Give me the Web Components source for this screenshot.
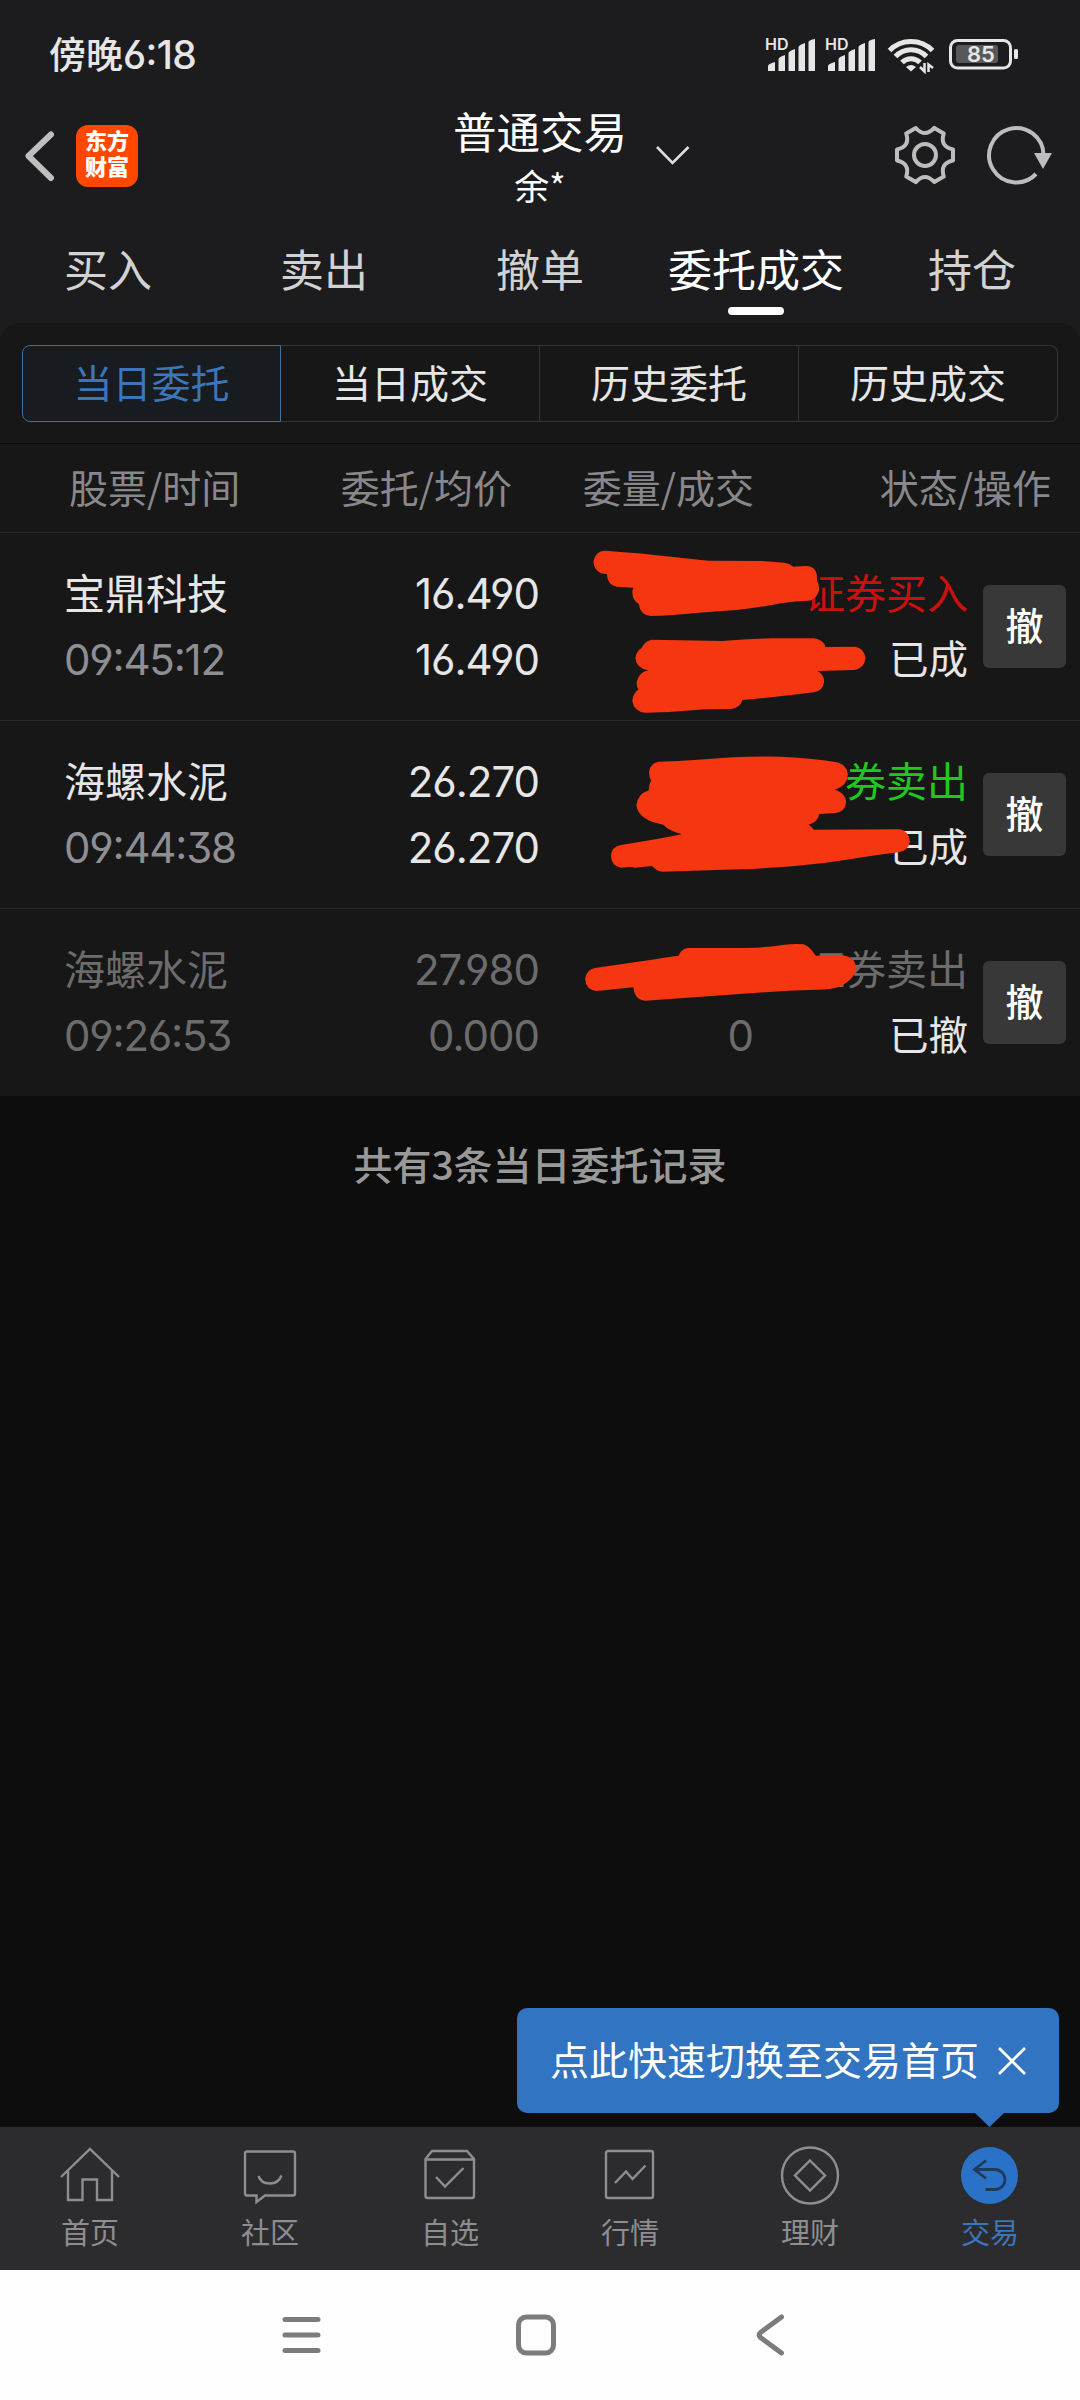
<!DOCTYPE html>
<html lang="zh-CN">
<head>
<meta charset="utf-8">
<title>普通交易</title>
<style>
    body {
        margin: 0;
        background: #0d0d0d;
        font-family: "Noto Sans CJK SC", sans-serif;
    }
</style>
</head>
<body>
<trade-app></trade-app>

<script>
// Base class: every component only has to return its markup
class BaseElement extends HTMLElement {
    constructor() {
        super();
        this.attachShadow({ mode: "open" });
    }

    connectedCallback() {
        this.shadowRoot.innerHTML = `
            <style>
                * { box-sizing: border-box; }
                svg { display: block; }
            </style>
            ${this.template()}
        `;
    }
}

class StatusBar extends BaseElement {
    signal() {
        return `
            <div class="signal">
                <span>HD</span>
                <svg width="54" height="34" viewBox="0 0 54 34" fill="#e6e6e6">
                    <path d="M4 34V29Q4 27 11 25V34ZM14.500 34V22Q15 20 21 18V34ZM24.500 34V16Q25 14 31 12V34ZM34.500 34V10Q35 8 41 6V34ZM44.500 34V5Q45 3 51 2V34Z"/>
                </svg>
            </div>
        `;
    }

    template() {
        return `
            <style>
                :host {
                    display: flex;
                    align-items: center;
                    height: 108px;
                    padding: 0 60px 0 49px;
                    color: #e6e6e6;
                }
                .time {
                    flex: 1;
                    padding-bottom: 3px;
                    font-size: 37px;
                    font-weight: 500;
                }
                .time b {
                    font: 500 39px Inter, sans-serif;
                    font-feature-settings: "cv03", "calt";
                    letter-spacing: -0.600px;
                }
                .signal {
                    position: relative;
                    width: 60px;
                }
                .signal span {
                    position: absolute;
                    left: 1px;
                    top: -1px;
                    font: 600 16px/16px Inter, sans-serif;
                }
            </style>
            <div class="time">傍晚<b>6:18</b></div>
            ${this.signal()}
            ${this.signal()}
            <svg width="136" height="40" viewBox="884 34 136 40" fill="none" stroke="#e6e6e6">
                <g stroke-width="5">
                    <path d="M889.500 50.500A30 30 0 0 1 932.500 50.500"/>
                    <path d="M895.500 56.500A21 21 0 0 1 926.500 56.500"/>
                    <path d="M902 62.500A12.500 12.500 0 0 1 920 62.500"/>
                </g>
                <path d="M906 67Q911 63 916 67L911 71.500Z" fill="#e6e6e6" stroke="none"/>
                <path d="M924.500 63V71.500L920 67M928.500 72V64.500L933 68" stroke-width="2.500"/>
                <rect x="950.500" y="40.500" width="60" height="27.500" rx="7" stroke-width="3"/>
                <rect x="956" y="45" width="42" height="18" rx="3" fill="#58585a" stroke="none"/>
                <rect x="1014" y="49" width="4" height="10" rx="1.500" fill="#e6e6e6" stroke="none"/>
                <text x="981" y="62" text-anchor="middle" font-family="Inter" font-size="22" font-weight="600" fill="#e6e6e6" stroke="none">85</text>
            </svg>
        `;
    }
}

class AppHeader extends BaseElement {
    // Six flat teeth joined by concave curves
    gearPath() {
        const turn = (x, y, deg) => {
            const a = deg * Math.PI / 180;
            return [x * Math.cos(a) - y * Math.sin(a), x * Math.sin(a) + y * Math.cos(a)]
                .map(n => n.toFixed(2)).join(" ");
        };
        let d = "";
        for (let deg = 0; deg < 360; deg += 60) {
            d += `${deg ? "L" : "M"}${turn(28, -5.5, deg)}L${turn(28, 5.5, deg)}`;
            d += `C${turn(19, 7.5, deg)} ${turn(16, 12.7, deg)} ${turn(18.8, 21.5, deg)}`;
        }
        return d + "Z";
    }

    template() {
        return `
            <style>
                :host {
                    display: grid;
                    grid-template-columns: 1fr auto 1fr;
                    align-items: center;
                    height: 104px;
                    padding-bottom: 8px;
                    box-sizing: border-box;
                    color: #fff;
                }
                .left {
                    display: flex;
                    align-items: center;
                    gap: 21px;
                    padding-left: 22px;
                }
                .logo {
                    width: 62px;
                    height: 62px;
                    padding-top: 4px;
                    border-radius: 12px;
                    background: #ff4700;
                    font-family: "Liberation Sans", "Noto Sans CJK SC", sans-serif;
                    font-size: 22px;
                    font-weight: 900;
                    line-height: 26px;
                    text-align: center;
                }
                .title {
                    position: relative;
                    margin: -8px 0;
                    text-align: center;
                }
                .name {
                    margin-bottom: 2px;
                    font-size: 43.500px;
                    line-height: 56px;
                }
                .user {
                    font-size: 35px;
                    line-height: 48px;
                }
                .arrow {
                    position: absolute;
                    left: calc(100% + 26px);
                    top: 40px;
                }
                .right {
                    display: flex;
                    justify-content: flex-end;
                    gap: 25px;
                    padding-right: 26px;
                }
            </style>
            <div class="left">
                <svg width="33" height="54" viewBox="22 129 33 54" fill="none" stroke="#bfbfbf" stroke-width="6" stroke-linecap="round" stroke-linejoin="round">
                    <path d="M51 134.500L28.500 156L51 178"/>
                </svg>
                <div class="logo">东方<br>财富</div>
            </div>
            <div class="title">
                <div class="name">普通交易</div>
                <div class="user">余*</div>
                <svg class="arrow" width="40" height="24" viewBox="653 143 40 24" fill="none" stroke="#ddd" stroke-width="2.600">
                    <path d="M657 147L672.500 163L688.500 147"/>
                </svg>
            </div>
            <div class="right">
                <svg width="64" height="64" viewBox="-32 -31 64 64" fill="none" stroke="#bdbdbd" stroke-width="4" stroke-linejoin="round">
                    <path d="${this.gearPath()}"/>
                    <circle r="11"/>
                </svg>
                <svg width="72" height="64" viewBox="982 124 72 64" fill="none" stroke="#bdbdbd" stroke-width="4">
                    <path d="M1036 174A27.200 27.200 0 1 1 1043.500 155"/>
                    <path d="M1034 153H1052L1043 169Z" fill="#bdbdbd" stroke="none"/>
                </svg>
            </div>
        `;
    }
}

class TradeTabs extends BaseElement {
    template() {
        const tabs = ["买入", "卖出", "撤单", "委托成交", "持仓"];
        return `
            <style>
                :host {
                    display: grid;
                    grid-template-columns: repeat(5, 1fr);
                    height: 111px;
                    padding-top: 27px;
                    box-sizing: border-box;
                    font-size: 44px;
                    line-height: 58px;
                    text-align: center;
                    color: #d2d2d2;
                }
                .active { color: #fff; }
                .active::after {
                    content: "";
                    display: block;
                    width: 56px;
                    height: 8px;
                    margin: 10px auto 0;
                    border-radius: 4px;
                    background: #fff;
                }
            </style>
            ${tabs.map(t => `<div class="${t === "委托成交" ? "active" : ""}">${t}</div>`).join("")}
        `;
    }
}

class SegmentBar extends BaseElement {
    template() {
        const items = ["当日委托", "当日成交", "历史委托", "历史成交"];
        return `
            <style>
                :host {
                    display: grid;
                    grid-template-columns: repeat(4, 1fr);
                    height: 121px;
                    padding: 22px 22px 21px;
                    border-bottom: 1px solid #0a0a0a;
                    box-sizing: border-box;
                    font-size: 39px;
                    line-height: 71px;
                    text-align: center;
                    color: #e6e6e6;
                }
                div {
                    border: 1px solid #353535;
                    border-left-width: 0;
                }
                div:first-of-type {
                    border: 1px solid #41709f;
                    border-radius: 8px 0 0 8px;
                    background: #181c21;
                    color: #3b76b8;
                }
                div:last-of-type { border-radius: 0 8px 8px 0; }
            </style>
            ${items.map(t => `<div>${t}</div>`).join("")}
        `;
    }
}

class OrderHead extends BaseElement {
    template() {
        return `
            <style>
                :host {
                    display: grid;
                    grid-template-columns: 222px 221px 242px 297px;
                    height: 89px;
                    padding-left: 69px;
                    box-sizing: border-box;
                    border-bottom: 1px solid #2a2a2a;
                    font-size: 39px;
                    line-height: 84px;
                    text-align: right;
                    color: #88888c;
                }
                span:first-of-type { text-align: left; }
            </style>
            <span>股票/时间</span>
            <span>委托/均价</span>
            <span>委量/成交</span>
            <span>状态/操作</span>
        `;
    }
}

class OrderRow extends BaseElement {
    set order(value) {
        this._order = value;
    }

    template() {
        const o = this._order;
        return `
            <style>
                :host {
                    position: relative;
                    display: grid;
                    grid-template-columns: 234px 240px 214px 215px 83px;
                    height: 188px;
                    padding: 25px 14px 0 65px;
                    box-sizing: border-box;
                    border-bottom: 1px solid #2a2a2a;
                    font-size: 41px;
                    line-height: 66px;
                    text-align: right;
                    white-space: nowrap;
                    color: #e6e6e6;
                }
                :host(:last-of-type) { border-bottom: 0; height: 187px; }
                .cell > div { height: 66px; }
                .name {
                    margin-left: -1px;
                    text-align: left;
                }
                .num {
                    font-family: Inter, sans-serif;
                    font-size: 42px;
                    line-height: 72px;
                    font-feature-settings: "cv03", "cv04", "cv09", "calt";
                    letter-spacing: -1px;
                }
                .time {
                    color: #8e8e93;
                    letter-spacing: -1.200px;
                }
                .state { font-size: 39.500px; }
                .buy { color: #cc1010; }
                .sell { color: #1ec81e; }
                .off, .dim .time { color: #6c6c6c; }
                .dim { color: #6c6c6c; }
                button {
                    width: 83px;
                    height: 83px;
                    margin: 27px 0 0 15px;
                    padding: 0 0 7px;
                    border: 0;
                    border-radius: 6px;
                    background: #383838;
                    color: #fff;
                    font: 500 38px "Noto Sans CJK SC", sans-serif;
                }
                .mark {
                    position: absolute;
                    left: 540px;
                    top: 0;
                }
            </style>
            <div class="cell name ${o.off ? "dim" : ""}">
                <div>${o.name}</div>
                <div class="num time">${o.time}</div>
            </div>
            <div class="cell num ${o.off ? "dim" : ""}">
                <div>${o.price}</div>
                <div>${o.avg}</div>
            </div>
            <div class="cell num dim">
                <div></div>
                <div>${o.done || ""}</div>
            </div>
            <div class="cell">
                <div class="${o.off ? "off" : o.side}">${o.type}</div>
                <div class="state">${o.state}</div>
            </div>
            <button>撤</button>
            <svg class="mark" width="540" height="188" viewBox="0 ${o.top} 1568 564" preserveAspectRatio="none" fill="#f63610">
                <path d="${o.mark}"/>
            </svg>
        `;
    }
}

class OrderList extends BaseElement {
    connectedCallback() {
        super.connectedCallback();
        const orders = [
            {
                name: "宝鼎科技", time: "09:45:12", price: "16.490", avg: "16.490",
                type: "证券买入", side: "buy", state: "已成", top: 639,
                mark: "M190 692Q300 700 380 710Q450 718 490 722L640 723L710 728Q725 730 735 740L772 738Q800 738 804 765V780Q812 795 810 812Q802 838 780 842Q740 842 700 850Q640 862 570 870L460 878Q380 886 322 888Q290 885 287 852Q268 840 268 815L271 803L222 800Q196 795 194 762Q160 762 155 727Q160 692 190 692Z"
                    + "M325 959L530 963Q600 957 670 955H795Q822 958 829 981L915 980Q942 984 945 1015Q942 1046 912 1050L806 1053Q826 1065 825 1085Q822 1112 795 1117Q700 1130 588 1140Q580 1164 555 1167L480 1168Q390 1177 305 1178Q272 1174 268 1142Q270 1120 286 1108Q279 1098 281 1085Q286 1058 314 1051Q280 1046 277 1015Q280 993 295 984Q305 962 325 959Z"
            },
            {
                name: "海螺水泥", time: "09:44:38", price: "26.270", avg: "26.270",
                type: "证券卖出", side: "sell", state: "已成", top: 63,
                mark: "M345 185L400 183Q500 177 560 172Q620 169 700 170Q800 175 862 187Q892 194 894 224Q892 258 856 269Q888 278 889 307Q886 336 858 339L811 342Q806 368 780 374Q790 380 795 389L1045 388Q1072 394 1074 425Q1070 452 1040 457Q960 467 900 478Q820 492 740 498Q640 506 580 508L355 515Q338 514 326 498L275 503L262 500L235 503Q207 498 206 468Q208 440 235 435Q330 420 412 403Q375 392 358 374Q284 360 280 315Q284 282 316 271Q316 252 323 242Q316 230 317 215Q320 190 345 185Z"
            },
            {
                name: "海螺水泥", time: "09:26:53", price: "27.980", avg: "0.000", done: "0",
                type: "证券卖出", side: "sell", state: "已撤", off: true, top: 627,
                mark: "M430 744H600Q660 743 710 734Q740 731 765 733Q785 740 800 767L880 766Q915 772 919 805Q912 840 870 860Q840 870 800 869L720 872L305 902Q275 900 271 862L165 873Q133 870 131 838Q134 808 160 804Q240 792 300 783Q360 773 403 767Q410 746 430 744Z"
            }
        ];
        orders.forEach(o => {
            const row = document.createElement("order-row");
            row.order = o;
            this.shadowRoot.appendChild(row);
        });
    }

    template() {
        return `<style>:host { display: block; }</style>`;
    }
}

class HintBubble extends BaseElement {
    template() {
        return `
            <style>
                :host {
                    position: absolute;
                    right: 21px;
                    bottom: 157px;
                    display: flex;
                    align-items: center;
                    gap: 19px;
                    width: 542px;
                    height: 105px;
                    padding: 0 0 5px 33px;
                    box-sizing: border-box;
                    border-radius: 10px;
                    background: #3174c2;
                    color: #fff;
                    font-size: 39px;
                    white-space: nowrap;
                }
                .close { margin-top: 5px; }
                .tip {
                    position: absolute;
                    left: 458px;
                    top: 105px;
                }
            </style>
            <slot></slot>
            <svg class="close" width="28" height="28" viewBox="0 0 28 28" stroke="#fff" stroke-width="2.800">
                <path d="M1 1L27 27M27 1L1 27"/>
            </svg>
            <svg class="tip" width="29" height="14" viewBox="0 0 29 14" fill="#3174c2">
                <path d="M0 0H29L14.500 14Z"/>
            </svg>
        `;
    }
}

class BottomNav extends BaseElement {
    template() {
        const items = [
            ["首页", `<path d="M1 31L30 3L59 31M8 25V54H22.500V33.500H37V54H52V25"/>`],
            ["社区", `<path d="M7 5.500H53Q55 5.500 55 7.500V47.500Q55 49.500 53 49.500H25L16.500 56V49.500H7Q5 49.500 5 47.500V7.500Q5 5.500 7 5.500Z"/><path d="M18.500 30Q21 37.500 30 37.500Q38.500 37.500 41.500 29.500"/>`],
            ["自选", `<path d="M5.500 13L12 5H47L54 13V50Q54 52 52 52H7.500Q5.500 52 5.500 50ZM5.500 13.500H54M16 31L25 40.500L43.500 22"/>`],
            ["行情", `<rect x="6" y="5" width="47" height="47" rx="2"/><path d="M15 37L26 25.500L32.500 33L45.500 19.500"/>`],
            ["理财", `<circle cx="30" cy="29.500" r="28"/><path d="M30 14.500L45 29.500L30 44.500L15 29.500Z"/>`],
            ["交易", `<circle cx="29.500" cy="29.500" r="28.500" fill="#2a72c8" stroke="none"/><path stroke="#203a5c" stroke-width="2.800" d="M26 14.500L14.500 23.500L26 32.500M14.500 23.500H35A10 10 0 0 1 35 43.500H25.500"/>`]
        ];
        return `
            <style>
                :host {
                    position: relative;
                    display: grid;
                    grid-template-columns: repeat(6, 1fr);
                    height: 143px;
                    padding-top: 19px;
                    box-sizing: border-box;
                    background: #2c2c2e;
                    color: #8e8e92;
                    font-size: 29px;
                    line-height: 40px;
                    text-align: center;
                }
                .item svg { margin: 0 auto 5px; }
                .item:last-of-type { color: #3b76b8; }
            </style>
            ${items.map(([label, icon]) => `
                <div class="item">
                    <svg width="60" height="60" viewBox="0 0 60 60" fill="none" stroke="#8e8e92" stroke-width="2.400">${icon}</svg>
                    ${label}
                </div>
            `).join("")}
            <hint-bubble>点此快速切换至交易首页</hint-bubble>
        `;
    }
}

class SystemNav extends BaseElement {
    template() {
        return `
            <style>
                :host {
                    display: flex;
                    justify-content: center;
                    gap: 191px;
                    height: 130px;
                    padding: 42px 9px 0 0;
                    box-sizing: border-box;
                    background: #fefefe;
                }
                svg {
                    fill: none;
                    stroke: #7c7c7c;
                    stroke-width: 5;
                    stroke-linecap: round;
                    stroke-linejoin: round;
                }
            </style>
            <svg width="44" height="46" viewBox="0 0 44 46"><path d="M6 7.500H39M6 23H39M6 38.500H39"/></svg>
            <svg width="44" height="46" viewBox="0 0 44 46"><rect x="4.500" y="5" width="35" height="36" rx="8"/></svg>
            <svg width="44" height="46" viewBox="0 0 44 46"><path d="M32.500 5L11.500 20.500Q9 23 11.500 25.500L32.500 41"/></svg>
        `;
    }
}

class TradeApp extends BaseElement {
    template() {
        return `
            <style>
                :host {
                    display: flex;
                    flex-direction: column;
                    width: 1080px;
                    height: 2400px;
                    overflow: hidden;
                }
                .top { background: #1c1c1e; }
                .panel {
                    border-radius: 20px 20px 0 0;
                    background: #171717;
                }
                .summary {
                    flex: 1;
                    padding-top: 38px;
                    color: #999;
                    font-size: 39px;
                    font-weight: 500;
                    line-height: 58px;
                    text-align: center;
                }
            </style>
            <div class="top">
                <status-bar></status-bar>
                <app-header></app-header>
                <trade-tabs></trade-tabs>
                <div class="panel">
                    <segment-bar></segment-bar>
                    <order-head></order-head>
                    <order-list></order-list>
                </div>
            </div>
            <div class="summary">共有3条当日委托记录</div>
            <bottom-nav></bottom-nav>
            <system-nav></system-nav>
        `;
    }
}

customElements.define("status-bar", StatusBar);
customElements.define("app-header", AppHeader);
customElements.define("trade-tabs", TradeTabs);
customElements.define("segment-bar", SegmentBar);
customElements.define("order-head", OrderHead);
customElements.define("order-row", OrderRow);
customElements.define("order-list", OrderList);
customElements.define("hint-bubble", HintBubble);
customElements.define("bottom-nav", BottomNav);
customElements.define("system-nav", SystemNav);
customElements.define("trade-app", TradeApp);
</script>
</body>
</html>
